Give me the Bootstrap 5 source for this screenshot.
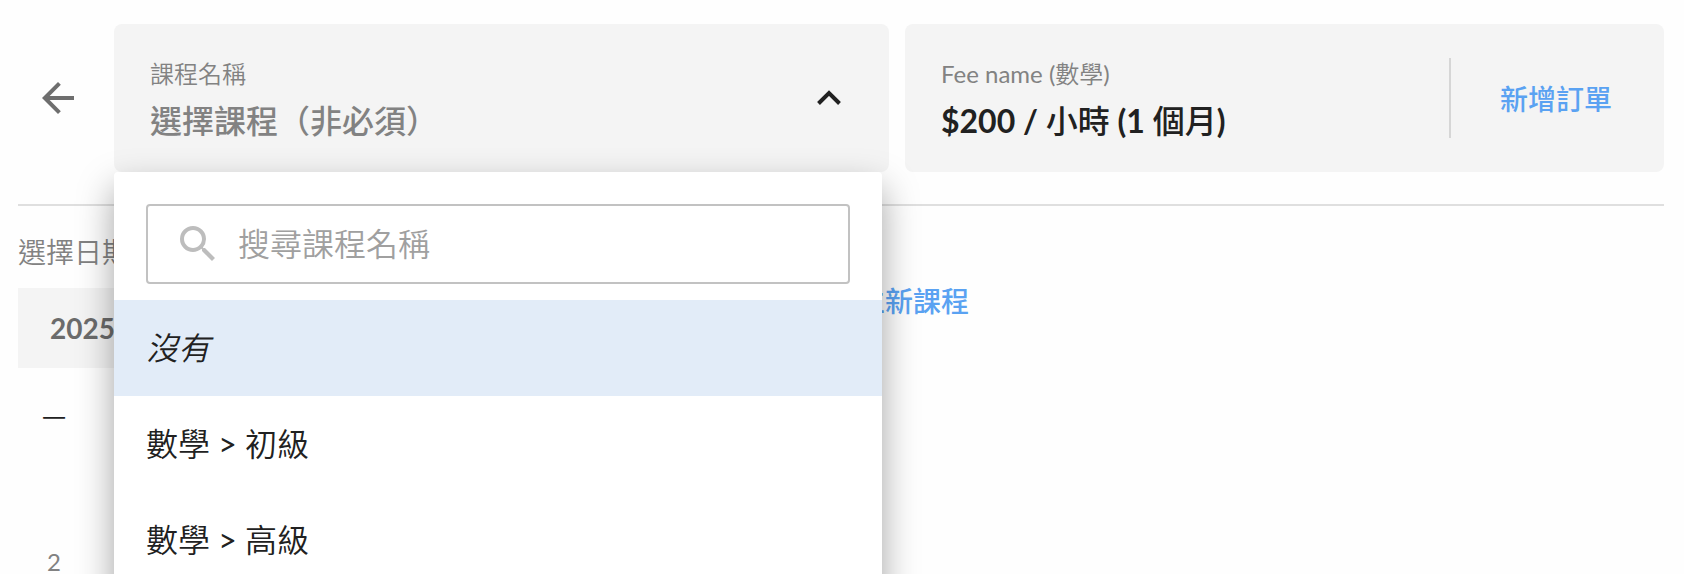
<!DOCTYPE html>
<html lang="zh-Hant">
<head>
<meta charset="utf-8">
<meta name="viewport" content="width=device-width, initial-scale=1">
<title>新增訂單</title>
<link href="https://cdn.jsdelivr.net/npm/bootstrap@5.3.0/dist/css/bootstrap.min.css" rel="stylesheet">
<style>
  :root { --ink: #212121; --muted: #828282; --accent: #5aa2f2; --panel: #f4f4f4; }
  body { font-family: Lato, "Noto Sans CJK TC", sans-serif; color: var(--ink); background: #fefefe; }
  .page { height: 100vh; padding: 24px 20px 0 18px; }
  .back-btn { width: 96px; padding-left: 16px; }
  .panel { background: var(--panel); border-radius: 8px; height: 148px; }
  .course-col { flex: 775 1 0; }
  .fee-col { flex: 759 1 0; }
  .field { padding: 0 48px 0 36px; color: var(--ink); }
  .field-label { font-size: 24px; line-height: 44px; padding-bottom: 2px; color: var(--muted); font-weight: 400; }
  .field-value { font-size: 32px; line-height: 46px; font-weight: 500; }
  .field-value b { font-weight: 700; }
  .cjk-thin { font-weight: 350; }
  .hint { color: var(--muted); }
  .order-side { border-left: 2px solid #d6d6d6; height: 80px; width: 215px; padding: 2px 3px 0 0; }
  .link-text { font-size: 28px; line-height: 40px; color: var(--accent); font-weight: 500; text-decoration: none; }
  .rule { height: 2px; background: #dfdfdf; margin-top: 32px; }
  .course-menu { top: 100%; left: 0; width: calc(100% - 7px); z-index: 10; background: #fff; border-radius: 4px; padding-bottom: 32px; box-shadow: 0 16px 36px rgba(0, 0, 0, .36); }
  .search-row { padding: 32px 32px 16px; }
  .search-box { height: 80px; border: 2px solid #c2c2c2; border-radius: 4px; padding-left: 26px; }
  .search-box input { font-size: 32px; line-height: 48px; margin-left: 16px; color: var(--ink); outline: 0; }
  .search-box input::placeholder { color: #a0a0a0; opacity: 1; font-weight: 350; }
  .option { height: 96px; padding: 0 32px; font-size: 32px; line-height: 48px; color: var(--ink); font-weight: 350; }
  .option span { font-weight: 400; }
  .option.active { background: #e2ecf8; }
  .calendar { flex: 0 0 680px; }
  .cal-label { font-size: 28px; line-height: 48px; margin: 22px 0 12px; color: var(--muted); font-weight: 350; }
  .cal-head { height: 80px; padding-left: 32px; background: var(--panel); color: #6b6b6b; font-size: 28px; font-weight: 700; margin-bottom: 14px; }
  .cal-grid th, .cal-grid td { width: 72px; height: 72px; padding: 0; text-align: center; font-size: 24px; font-weight: 350; }
  .cal-grid td { color: var(--muted); font-weight: 400; }
  .new-course { margin: 75px 0 0 131px; }
</style>
</head>
<body>
<main class="page overflow-hidden">
  <header class="d-flex">
    <button class="btn back-btn border-0 text-start" type="button" aria-label="返回">
      <svg class="d-block" width="48" height="48" viewBox="0 0 24 24" fill="#6e6e6e"><path d="M20 11H7.83l5.59-5.59L12 4l-8 8 8 8 1.41-1.41L7.83 13H20v-2z"/></svg>
    </button>
    <div class="d-flex flex-grow-1 gap-3">
      <div class="course-col position-relative">
        <button class="panel field border-0 w-100 d-flex align-items-center justify-content-between text-start" type="button" aria-expanded="true" aria-controls="courseMenu">
          <span class="d-flex flex-column">
            <span class="field-label cjk-thin">課程名稱</span>
            <span class="field-value hint">選擇課程（非必須）</span>
          </span>
          <svg width="24" height="16" viewBox="0 0 24 16" fill="none" stroke="#212121" stroke-width="4"><path d="M1.500 13.500 12 3l10.500 10.500"/></svg>
        </button>
        <div class="course-menu position-absolute" id="courseMenu">
          <div class="search-row">
            <div class="search-box d-flex align-items-center">
              <svg class="flex-shrink-0" width="48" height="48" viewBox="0 0 24 24" fill="#bdbdbd"><path d="M15.500 14h-.79l-.28-.27A6.470 6.470 0 0 0 16 9.500 6.500 6.500 0 1 0 9.500 16c1.610 0 3.090-.59 4.230-1.570l.27.28v.79l5 4.990L20.490 19l-4.990-5zm-6 0C7.010 14 5 11.990 5 9.500S7.010 5 9.500 5 14 7.010 14 9.500 11.990 14 9.500 14z"/></svg>
              <input class="border-0 bg-transparent flex-grow-1 p-0" type="text" placeholder="搜尋課程名稱" aria-label="搜尋課程名稱">
            </div>
          </div>
          <div>
            <button class="option active border-0 w-100 text-start fst-italic" type="button">沒有</button>
            <button class="option border-0 bg-transparent w-100 text-start" type="button">數學<span> &gt; </span>初級</button>
            <button class="option border-0 bg-transparent w-100 text-start" type="button">數學<span> &gt; </span>高級</button>
          </div>
        </div>
      </div>
      <div class="fee-col panel d-flex align-items-center">
        <div class="field flex-grow-1">
          <div class="field-label">Fee name (<span class="cjk-thin">數學</span>)</div>
          <div class="field-value"><b>$200 / </b>小時<b> (1 </b>個月<b>)</b></div>
        </div>
        <div class="order-side d-flex align-items-center justify-content-center flex-shrink-0">
          <a class="link-text" href="#">新增訂單</a>
        </div>
      </div>
    </div>
  </header>
  <div class="rule"></div>
  <div class="d-flex">
    <section class="calendar">
      <div class="cal-label">選擇日期</div>
      <div class="cal-head d-flex align-items-center">2025</div>
      <table class="cal-grid">
        <thead><tr><th scope="col">一</th></tr></thead>
        <tbody><tr><td></td></tr><tr><td>2</td></tr></tbody>
      </table>
    </section>
    <section class="new-course"><a class="link-text" href="#">建立新課程</a></section>
  </div>
</main>
<script src="https://cdn.jsdelivr.net/npm/bootstrap@5.3.0/dist/js/bootstrap.bundle.min.js"></script>
</body>
</html>
